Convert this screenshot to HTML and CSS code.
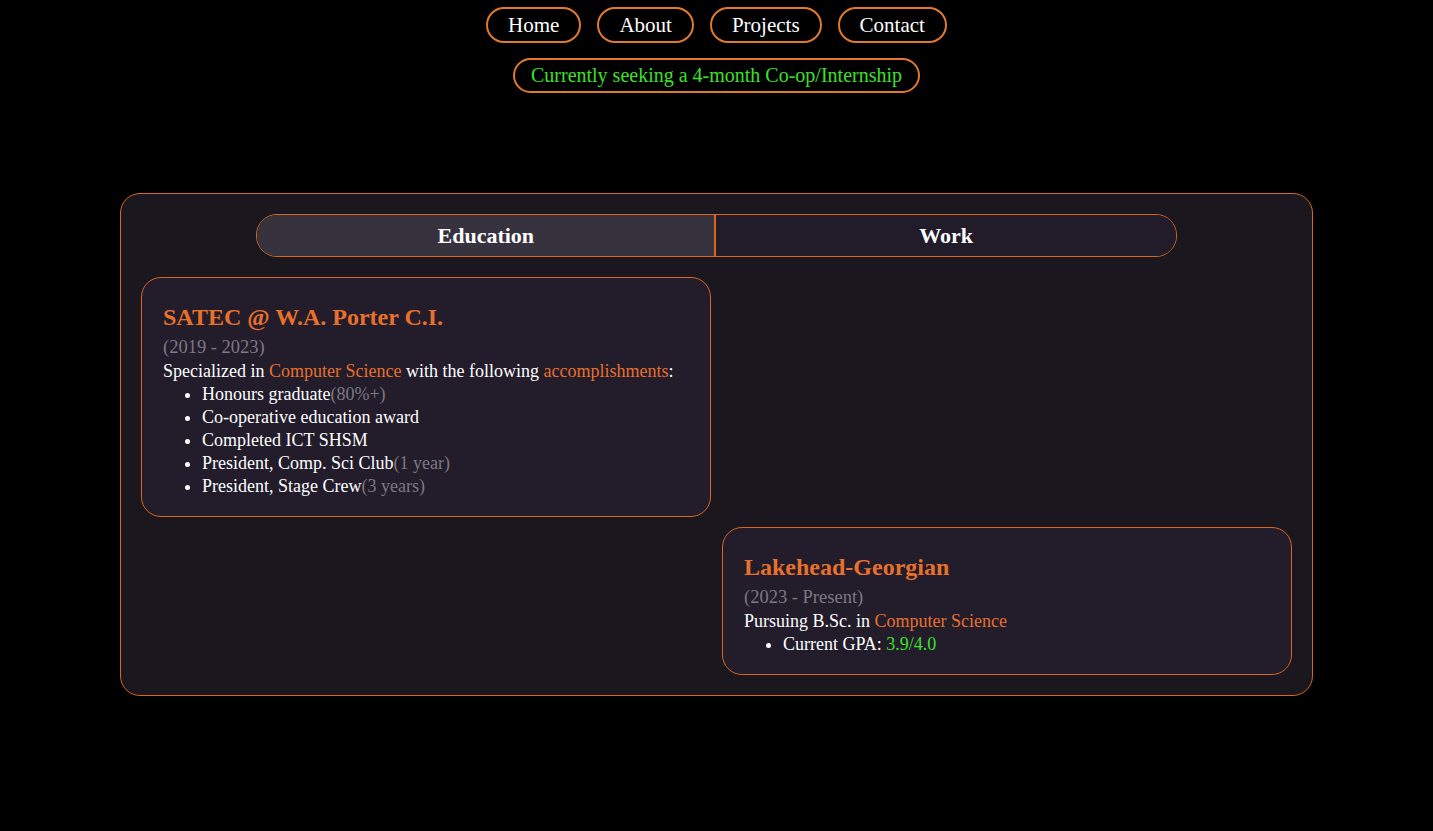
FILE: index.html
```html
<!DOCTYPE html>
<html lang="en">
<head>
<meta charset="utf-8">
<title>Experience</title>
<link rel="stylesheet" href="styles.css">
</head>
<body>
<header class="top">
  <nav class="nav">
    <a class="nav-btn" href="#">Home</a>
    <a class="nav-btn" href="#">About</a>
    <a class="nav-btn" href="#">Projects</a>
    <a class="nav-btn" href="#">Contact</a>
  </nav>
  <div class="seeking">Currently seeking a 4-month Co-op/Internship</div>
</header>
<main class="panel">
  <div class="tabs">
    <button class="tab active">Education</button>
    <button class="tab">Work</button>
  </div>
  <div class="timeline">
    <section class="card card-left">
      <h3 class="card-title">SATEC @ W.A. Porter C.I.</h3>
      <div class="date">(2019 - 2023)</div>
      <p class="desc">Specialized in <span class="hl">Computer Science</span> with the following <span class="hl">accomplishments</span>:</p>
      <ul class="list">
        <li>Honours graduate<span class="muted">(80%+)</span></li>
        <li>Co-operative education award</li>
        <li>Completed ICT SHSM</li>
        <li>President, Comp. Sci Club<span class="muted">(1 year)</span></li>
        <li>President, Stage Crew<span class="muted">(3 years)</span></li>
      </ul>
    </section>
    <section class="card card-right">
      <h3 class="card-title">Lakehead-Georgian</h3>
      <div class="date">(2023 - Present)</div>
      <p class="desc">Pursuing B.Sc. in <span class="hl">Computer Science</span></p>
      <ul class="list">
        <li>Current GPA: <span class="green">3.9/4.0</span></li>
      </ul>
    </section>
  </div>
</main>
</body>
</html>
```

FILE: styles.css
```css
html, body {
  margin: 0;
  padding: 0;
  background: #000;
  color: #fff;
  font-family: "Liberation Serif", "DejaVu Serif", serif;
}

.top {
  display: flex;
  flex-direction: column;
  align-items: center;
  padding-top: 7px;
  gap: 15px;
}

.nav {
  display: flex;
  gap: 16px;
}

.nav-btn {
  display: flex;
  align-items: center;
  justify-content: center;
  height: 36px;
  box-sizing: border-box;
  padding: 0 20px;
  border: 2px solid #e07a2e;
  border-radius: 18px;
  color: #fff;
  text-decoration: none;
  font-size: 21px;
}

.seeking {
  height: 35px;
  box-sizing: border-box;
  display: flex;
  align-items: center;
  padding: 0 16px;
  border: 2px solid #e07a2e;
  border-radius: 18px;
  color: #3ee02a;
  font-size: 20px;
}

.panel {
  width: 1193px;
  box-sizing: border-box;
  margin: 100px auto 0;
  padding: 20px;
  background: #1a171e;
  border: 1px solid #d8661c;
  border-radius: 20px;
}

.tabs {
  width: 80%;
  margin: 0 auto;
  display: grid;
  grid-template-columns: 1fr 1fr;
  height: 43px;
  box-sizing: border-box;
  border: 1px solid #d8661c;
  border-radius: 21px;
  overflow: hidden;
}

.tab {
  border: none;
  margin: 0;
  padding: 0;
  font-family: inherit;
  font-weight: bold;
  font-size: 22px;
  color: #fff;
  background: #221c2a;
}

.tab.active {
  background: #36323e;
  border-right: 2px solid #d8661c;
}

.timeline {
  margin-top: 20px;
  display: grid;
  grid-template-columns: 1fr 1fr;
  column-gap: 11px;
  row-gap: 10px;
}

.card {
  background: #221c2b;
  border: 1px solid #d8661c;
  border-radius: 20px;
  padding: 24px 20px 18px 21px;
}

.card-left {
  grid-column: 1;
  grid-row: 1;
}

.card-right {
  grid-column: 2;
  grid-row: 2;
}

.card-title {
  margin: 0 0 3px;
  font-size: 24px;
  line-height: 30px;
  color: #e7702c;
}

.date {
  font-size: 18.5px;
  line-height: 24px;
  color: #7d7884;
}

.desc {
  margin: 0;
  font-size: 18px;
  line-height: 24px;
}

.hl {
  color: #e7702c;
}

.list {
  margin: 0;
  padding-left: 39px;
  font-size: 18px;
  line-height: 23px;
}

.muted {
  color: #7d7884;
}

.green {
  color: #3ee02a;
}
```
